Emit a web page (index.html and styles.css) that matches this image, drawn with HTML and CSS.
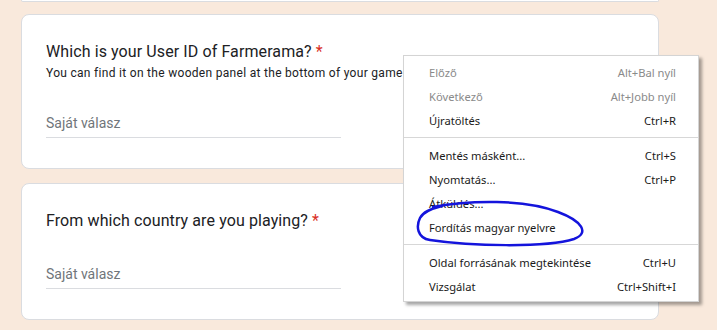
FILE: index.html
```html
<!DOCTYPE html>
<html lang="hu">
<head>
    <meta charset="UTF-8">
    <title>Farmerama kérdőív</title>
    <link rel="stylesheet" href="styles.css">
</head>
<body>
    <div class="form">
        <div class="card-stub"></div>

        <div class="card">
            <div class="question">Which is your User ID of Farmerama? <span class="req">*</span></div>
            <div class="description">You can find it on the wooden panel at the bottom of your game</div>
            <div class="answer">Saját válasz</div>
        </div>

        <div class="card">
            <div class="question">From which country are you playing? <span class="req">*</span></div>
            <div class="answer">Saját válasz</div>
        </div>
    </div>

    <!-- jobb klikkes menü -->
    <ul class="context-menu">
        <li class="disabled"><span>Előző</span><span>Alt+Bal nyíl</span></li>
        <li class="disabled"><span>Következő</span><span>Alt+Jobb nyíl</span></li>
        <li><span>Újratöltés</span><span>Ctrl+R</span></li>
        <li class="sep"></li>
        <li><span>Mentés másként...</span><span>Ctrl+S</span></li>
        <li><span>Nyomtatás...</span><span>Ctrl+P</span></li>
        <li><span>Átküldés...</span><span></span></li>
        <li><span>Fordítás magyar nyelvre</span><span></span></li>
        <li class="sep"></li>
        <li><span>Oldal forrásának megtekintése</span><span>Ctrl+U</span></li>
        <li><span>Vizsgálat</span><span>Ctrl+Shift+I</span></li>
    </ul>

    <svg class="scribble" width="717" height="330" viewBox="0 0 717 330">
        <path d="M 433 207 C 470 200, 525 199, 558 212 C 582 221, 590 233, 574 239 C 545 248, 470 246, 430 240 C 417 238, 416 226, 420 218 C 423 212, 430 209, 442 206" />
    </svg>
</body>
</html>
```

FILE: styles.css
```css
body {
    margin: 0;
    background-color: #f9e9dc;
    font-family: Roboto, "Noto Sans", sans-serif;
    color: #202124;
    width: 717px;
    height: 330px;
    overflow: hidden;
    position: relative;
}
.form {
    width: 638px;
    margin-left: 21px;
    display: flex;
    flex-direction: column;
}
.card-stub {
    height: 1px;
    background-color: #fff;
    border: 1px solid #dadce0;
    border-top: none;
    border-radius: 0 0 8px 8px;
    margin-bottom: 12px;
}
.card {
    background-color: #fff;
    border: 1px solid #dadce0;
    border-radius: 8px;
    padding: 25px 24px 30px;
    margin-bottom: 14px;
}
.question {
    font-size: 16px;
    line-height: 24px;
    letter-spacing: 0.1px;
    color: #202124;
}
.req {
    color: #d93025;
}
.description {
    font-size: 12px;
    line-height: 18px;
    letter-spacing: 0.3px;
    white-space: nowrap;
}
.answer {
    width: 295px;
    margin-top: 31px;
    font-size: 14px;
    line-height: 20px;
    color: #70757a;
    padding-bottom: 4px;
    border-bottom: 1px solid #dadce0;
}
.context-menu {
    position: absolute;
    left: 403px;
    top: 55px;
    width: 272px;
    margin: 0;
    padding: 5px 22px 2px 0;
    list-style: none;
    background-color: #fff;
    border: 1px solid #d4d4d4;
    box-shadow: 3px 3px 3px rgba(0, 0, 0, 0.35);
    font-family: "Noto Sans", "Open Sans", sans-serif;
    font-size: 11.2px;
    color: #1a1a1a;
}
.context-menu li {
    display: flex;
    justify-content: space-between;
    height: 24px;
    line-height: 24px;
    padding-left: 25px;
}
.context-menu li.disabled {
    color: #8a8a8a;
}
.context-menu li.sep {
    height: 1px;
    margin: 4px -22px 6px 0;
    padding: 0;
    background-color: #d7d7d7;
}
.scribble {
    position: absolute;
    left: 0;
    top: 0;
    pointer-events: none;
}
.scribble path {
    fill: none;
    stroke: #1414dc;
    stroke-width: 2.5;
    stroke-linecap: round;
}
```
